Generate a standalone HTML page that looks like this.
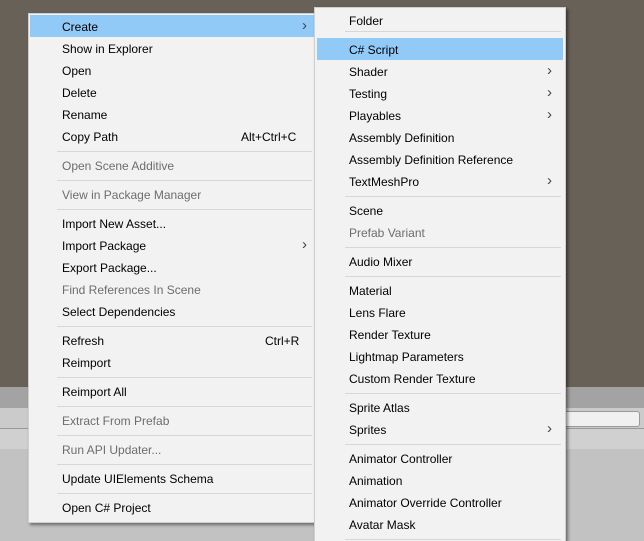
<!DOCTYPE html><html><head><style>
html,body{margin:0;width:644px;height:541px;overflow:hidden;}
body{position:relative;background:#c2c2c2;font-family:"Liberation Sans",sans-serif;font-size:12px;}
.bg{position:absolute;left:0;width:644px}
.m{position:absolute;background:#f2f2f2;border:1px solid #cfcfcf;box-shadow:2px 2px 3px rgba(0,0,0,.45)}
.i{position:absolute;height:22px;line-height:24px;color:#000;white-space:nowrap}
.d{color:#6d6d6d}
.h{background:#91c9f7}
.s{position:absolute;height:1px;background:#d7d7d7}
</style></head><body>
<div class="bg" style="top:0;height:387px;background:#686158"></div>
<div class="bg" style="top:387px;height:21px;background:#a3a3a3"></div>
<div class="bg" style="top:408px;height:20px;background:#cbcbcb;border-bottom:1px solid #999"></div>
<div style="position:absolute;left:560px;top:411px;width:78px;height:14px;background:#f0f0f0;border:1px solid #999;border-radius:3px"></div>
<div class="bg" style="top:429px;height:20px;background:#d0d0d0"></div>
<div class="m" style="left:28px;top:13px;width:287px;height:508px">
<div class="i h" style="left:1px;top:1px;width:284px"></div>
</div>
<div id="m1"></div>
<div class="m" style="left:314px;top:7px;width:250px;height:540px">
<div class="i h" style="left:2px;top:30px;width:246px"></div>
</div>
<div id="m2"></div>
<script>
function build(items,x,tx,w,sx,cx){
 let h='';
 for(const it of items){
  if(it[0]=='-'){h+=`<div class="s" style="left:${sx}px;top:${it[1]}px;width:${x+w-sx-3}px"></div>`;continue;}
  const [t,y,dis,ch]=it;
  h+=`<div class="i${dis?' d':''}" style="left:${tx}px;top:${y-11}px">${t}</div>`;
  if(ch)h+=`<div class="i" style="left:${cx}px;top:${y-12}px;color:#444;font-size:15px">&#x203A;</div>`;
 }
 return h;
}
const a=[["Create",26,0,1],["Show in Explorer",48],["Open",70],["Delete",92],["Rename",114],["Copy Path",136],["-",151],["Open Scene Additive",165,1],["-",180],["View in Package Manager",194,1],["-",209],["Import New Asset...",223],["Import Package",245,0,1],["Export Package...",267],["Find References In Scene",289,1],["Select Dependencies",311],["-",326],["Refresh",340],["Reimport",362],["-",377],["Reimport All",391],["-",406],["Extract From Prefab",420,1],["-",435],["Run API Updater...",449,1],["-",464],["Update UIElements Schema",478],["-",493],["Open C# Project",507]];
const b=[["Folder",20],["-",31],["C# Script",49],["Shader",71,0,1],["Testing",93,0,1],["Playables",115,0,1],["Assembly Definition",137],["Assembly Definition Reference",159],["TextMeshPro",181,0,1],["-",196],["Scene",210],["Prefab Variant",232,1],["-",247],["Audio Mixer",261],["-",276],["Material",290],["Lens Flare",312],["Render Texture",334],["Lightmap Parameters",356],["Custom Render Texture",378],["-",393],["Sprite Atlas",407],["Sprites",429,0,1],["-",444],["Animator Controller",458],["Animation",480],["Animator Override Controller",502],["Avatar Mask",524],["-",539]];
document.getElementById('m1').innerHTML=build(a,28,62,287,57,302)+`<div class="i" style="left:241px;top:125px">Alt+Ctrl+C</div><div class="i" style="left:265px;top:329px">Ctrl+R</div>`;
document.getElementById('m2').innerHTML=build(b,314,349,250,345,547);
</script>
</body></html>
